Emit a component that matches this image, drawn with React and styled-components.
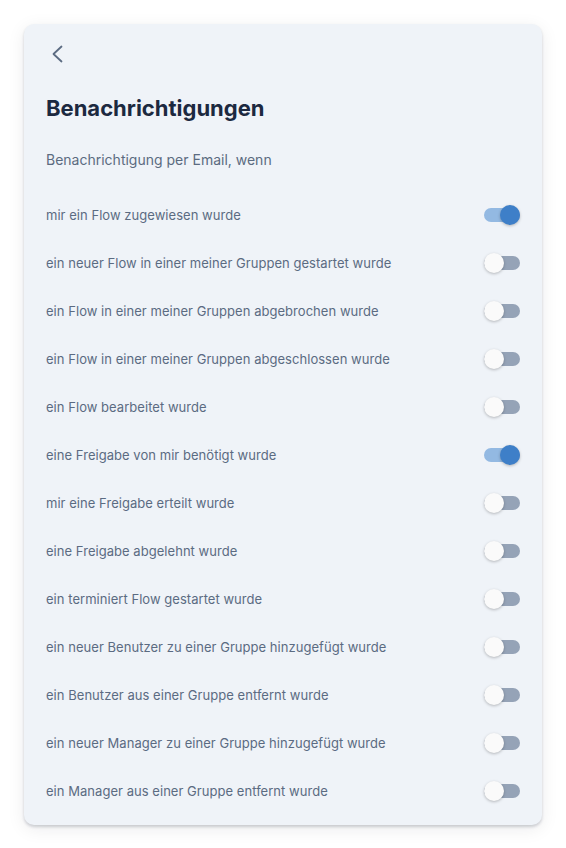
import React, { useState } from "react";
import styled, { createGlobalStyle } from "styled-components";

const Global = createGlobalStyle`
  html, body { margin: 0; padding: 0; background: #ffffff; }
  body { font-family: Inter, "Noto Sans", sans-serif; -webkit-font-smoothing: antialiased; }
  * { box-sizing: border-box; }
`;

const Page = styled.div`
  padding: 24px 24px 24px 24px;
`;

const Card = styled.div`
  width: 518px;
  background: #eff3f8;
  border-radius: 10px;
  box-shadow: 0 2px 3px rgba(15, 23, 42, 0.18), 0 4px 18px rgba(15, 23, 42, 0.08);
  padding: 18px 22px 10px 22px;
`;

const BackButton = styled.button`
  display: flex;
  align-items: center;
  justify-content: center;
  width: 24px;
  height: 24px;
  padding: 0;
  margin-left: -1px;
  border: none;
  background: transparent;
  color: #5b6b82;
  cursor: pointer;
`;

const Title = styled.h1`
  margin: 27px 0 0 0;
  font-size: 22px;
  line-height: 30px;
  font-weight: 700;
  letter-spacing: 0;
  color: #1c2940;
`;

const Subtitle = styled.p`
  margin: 27px 0 0 0;
  font-size: 14px;
  line-height: 20px;
  color: #5b6b80;
`;

const List = styled.div`
  margin-top: 21px;
  display: flex;
  flex-direction: column;
`;

const Row = styled.label`
  display: flex;
  align-items: center;
  justify-content: space-between;
  height: 48px;
  cursor: pointer;
`;

const RowText = styled.span`
  font-size: 13px;
  letter-spacing: 0.04px;
  color: #5b6b82;
`;

const Track = styled.span`
  position: relative;
  display: inline-block;
  width: 36px;
  height: 14px;
  border-radius: 7px;
  background: ${(p) => (p.$on ? "#93b9e2" : "#95a3b7")};
`;

const Thumb = styled.span`
  position: absolute;
  top: -3px;
  left: ${(p) => (p.$on ? "16px" : "0px")};
  width: 20px;
  height: 20px;
  border-radius: 50%;
  background: ${(p) => (p.$on ? "#3e7fc8" : "#fafafa")};
  box-shadow: 0 1px 3px rgba(0, 0, 0, 0.25);
`;

const items = [
  ["mir ein Flow zugewiesen wurde", true],
  ["ein neuer Flow in einer meiner Gruppen gestartet wurde", false],
  ["ein Flow in einer meiner Gruppen abgebrochen wurde", false],
  ["ein Flow in einer meiner Gruppen abgeschlossen wurde", false],
  ["ein Flow bearbeitet wurde", false],
  ["eine Freigabe von mir benötigt wurde", true],
  ["mir eine Freigabe erteilt wurde", false],
  ["eine Freigabe abgelehnt wurde", false],
  ["ein terminiert Flow gestartet wurde", false],
  ["ein neuer Benutzer zu einer Gruppe hinzugefügt wurde", false],
  ["ein Benutzer aus einer Gruppe entfernt wurde", false],
  ["ein neuer Manager zu einer Gruppe hinzugefügt wurde", false],
  ["ein Manager aus einer Gruppe entfernt wurde", false],
];

function Toggle({ on }) {
  return (
    <Track $on={on}>
      <Thumb $on={on} />
    </Track>
  );
}

export default function App() {
  const [state, setState] = useState(items.map((i) => i[1]));
  return (
    <Page>
      <Global />
      <Card>
        <BackButton aria-label="Zurück">
          <svg width="24" height="24" viewBox="0 0 24 24" fill="none" stroke="currentColor" strokeWidth="1.8" strokeLinecap="round" strokeLinejoin="round">
            <path d="M16.5 4.5L8.5 12l8 7.5" />
          </svg>
        </BackButton>
        <Title>Benachrichtigungen</Title>
        <Subtitle>Benachrichtigung per Email, wenn</Subtitle>
        <List>
          {items.map(([label], i) => (
            <Row key={label} onClick={() => setState((s) => s.map((v, j) => (j === i ? !v : v)))}>
              <RowText>{label}</RowText>
              <Toggle on={state[i]} />
            </Row>
          ))}
        </List>
      </Card>
    </Page>
  );
}
